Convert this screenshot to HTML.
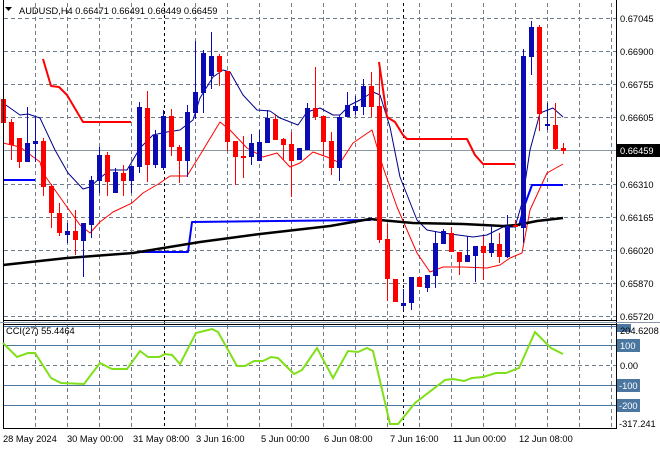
<!DOCTYPE html>
<html><head><meta charset="utf-8"><style>
html,body{margin:0;padding:0;background:#fff;width:660px;height:450px;overflow:hidden}
svg{display:block;font-family:"Liberation Sans",sans-serif}
</style></head><body>
<svg id="s" width="660" height="450" viewBox="0 0 660 450" xmlns="http://www.w3.org/2000/svg">
<rect width="660" height="450" fill="#fff"/>
<g id="grid" stroke="#6f7c8a" stroke-width="1" stroke-dasharray="4,3" fill="none"></g>
<line x1="3" y1="150.5" x2="616" y2="150.5" stroke="#8a96a3"/>
<line x1="164.5" y1="3" x2="164.5" y2="428" stroke="#000" stroke-dasharray="3,3"/>
<line x1="403.5" y1="3" x2="403.5" y2="428" stroke="#000" stroke-dasharray="3,3"/>
<g id="ind" fill="none"></g>
<g id="cdl"></g>
<line x1="3.5" y1="0" x2="3.5" y2="428" stroke="#000"/>
<line x1="616.5" y1="0" x2="616.5" y2="428" stroke="#000"/>
<line x1="3" y1="320.5" x2="617" y2="320.5" stroke="#000"/>
<line x1="0" y1="322.5" x2="660" y2="322.5" stroke="#8a96a3"/>
<line x1="3" y1="324.5" x2="617" y2="324.5" stroke="#000"/>
<line x1="3" y1="428.5" x2="617" y2="428.5" stroke="#000"/>
<line x1="4" y1="326.5" x2="616" y2="326.5" stroke="#4a76a0"/>
<line x1="4" y1="345.5" x2="616" y2="345.5" stroke="#4a76a0"/>
<line x1="4" y1="365.5" x2="616" y2="365.5" stroke="#6f7c8a" stroke-dasharray="4,3"/>
<line x1="4" y1="385.5" x2="616" y2="385.5" stroke="#4a76a0"/>
<line x1="4" y1="405.5" x2="616" y2="405.5" stroke="#4a76a0"/>
<polyline fill="none" stroke="#7fe01a" stroke-width="2" points="3,343 17,357 28,353 35,353 51,378 61,383 84,384 100,363 112,369 127,369 140,351 148,357 159,357 165,354 172,355 180,364 196,333 212,329 218,332 237,366 245,366 254,361 263,361 271,357 278,358 294,374 302,370 317,348 333,378 348,351 358,352 367,348 373,351 390,424 398,424 415,403 445,380 453,379 464,381 472,378 483,377 496,373 506,373 519,368 535,332 547,344 551,348 563,354"/>
<polygon points="5,7 12,7 8.5,11" fill="#000"/>
<text x="19" y="14" font-size="9.3" fill="#000">AUDUSD,H4  0.66471 0.66491 0.66449 0.66459</text>
<text x="6" y="334" font-size="9.3" fill="#000">CCI(27) 55.4464</text>
<g font-size="9.3" fill="#000">
<text x="620" y="22">0.67045</text>
<text x="620" y="55">0.66900</text>
<text x="620" y="88">0.66755</text>
<text x="620" y="121">0.66605</text>
<text x="620" y="188">0.66310</text>
<text x="620" y="221">0.66165</text>
<text x="620" y="254">0.66020</text>
<text x="620" y="287">0.65870</text>
<text x="620" y="320">0.65720</text>
</g>
<rect x="617" y="144" width="43" height="13" fill="#000"/>
<text x="620" y="154" font-size="9.3" fill="#fff">0.66459</text>
<rect x="617" y="324" width="14" height="8" fill="#4a76a0"/>
<text x="620" y="334" font-size="9.3" fill="#000">204.6208</text>
<rect x="617" y="339" width="23" height="13" fill="#4a76a0"/>
<text x="620" y="349" font-size="9.3" fill="#fff">100</text>
<text x="620" y="369" font-size="9.3" fill="#000">0.00</text>
<rect x="617" y="379" width="23" height="13" fill="#4a76a0"/>
<text x="619" y="389" font-size="9.3" fill="#fff">-100</text>
<rect x="617" y="399" width="23" height="13" fill="#4a76a0"/>
<text x="619" y="409" font-size="9.3" fill="#fff">-200</text>
<text x="619" y="427" font-size="9.3" fill="#000">-317.241</text>
<g font-size="9.3" fill="#000">
<text x="3" y="442">28 May 2024</text>
<text x="67" y="442">30 May 00:00</text>
<text x="133" y="442">31 May 08:00</text>
<text x="196" y="442">3 Jun 16:00</text>
<text x="261" y="442">5 Jun 00:00</text>
<text x="324" y="442">6 Jun 08:00</text>
<text x="390" y="442">7 Jun 16:00</text>
<text x="453" y="442">11 Jun 00:00</text>
<text x="519" y="442">12 Jun 08:00</text>
</g>
</svg>
<script>
var NS="http://www.w3.org/2000/svg";
function el(p,t,a){var e=document.createElementNS(NS,t);for(var k in a)e.setAttribute(k,a[k]);p.appendChild(e);return e;}
var g=document.getElementById("grid");
[18,51,84,117,184,217,250,283,316].forEach(function(y){el(g,"line",{x1:4,x2:616,y1:y+.5,y2:y+.5});});
for(var x=35;x<616;x+=32){if(x==163)continue;el(g,"line",{x1:x+.5,x2:x+.5,y1:3,y2:320});el(g,"line",{x1:x+.5,x2:x+.5,y1:325,y2:428});}
var ind=document.getElementById("ind");
function pl(pts,c,w){el(ind,"polyline",{points:pts,stroke:c,"stroke-width":w,"stroke-linejoin":"round"});}
pl("3,103 20,115 28,114 40,118 55,150 68,173 83,189 90,187 100,178 110,170 127,170 140,148 153,135 167,132 180,130 193,120 200,98 213,77 223,70 230,72 243,95 257,110 270,111 280,118 298,125 307,112 320,108 333,115 340,115 350,105 360,100 373,92 380,95 390,127 400,177 417,220 427,230 443,233 473,237 487,235 503,227 515,227 522,203 530,150 540,113 553,108 563,117","#00008b",1);
pl("3,143 20,147 40,162 43,173 50,183 67,207 80,225 90,233 100,222 113,212 132,203 143,193 160,183 170,176 187,176 200,155 220,122 230,130 247,148 263,157 277,153 290,167 300,163 313,152 327,157 340,163 353,143 372,130 383,167 397,207 417,253 430,272 443,267 463,267 487,268 500,265 510,258 522,253 530,210 547,173 563,164","#ff0000",1);
pl("43,59 51,86 59,87 67,95 83,122 131,122","#ff0000",2);
pl("379,62 387,117 395,122 403,135 407,139 467,139 475,155 483,164 515,164","#ff0000",2);
pl("3,180 35,180","#0000ff",2);
pl("137,252 188,252 192,222 370,220 372,218","#0000ff",2);
pl("519,226 524,207 532,185 563,185","#0000ff",2);
pl("3,265 67,258 133,253 200,242 260,234 330,226 370,219 380,220 413,223 463,224 503,226 517,225 537,221 563,218","#000",2.5);
var C=[["r",99,123,75,140],["r",122,145,119,160],["r",138,162,138,168],["b",143,162,107,162],["b",141,144,116,162],["r",141,187,138,196],["r",186,213,184,228],["r",213,233,203,236],["b",231,235,223,243],["r",231,240,210,255],["b",223,241,223,277],["b",180,225,176,238],["b",155,181,147,193],["r",155,182,152,196],["b",172,193,168,193],["r",173,181,165,196],["b",166,181,166,193],["b",107,167,102,173],["r",108,165,91,182],["b",135,165,130,168],["b",116,168,110,170],["r",116,147,109,156],["r",147,161,145,183],["b",112,161,105,177],["b",92,113,41,119],["b",53,93,50,113],["b",56,76,32,89],["r",56,72,54,86],["r",71,142,71,151],["r",141,157,141,185],["r",156,157,136,178],["b",143,157,134,165],["b",142,161,130,161],["b",118,143,110,143],["r",119,140,114,140],["r",139,145,138,160],["r",144,161,132,197],["b",148,160,148,160],["b",108,150,103,150],["r",108,117,67,120],["r",116,142,116,156],["r",141,168,132,175],["b",117,168,115,181],["b",105,117,92,117],["b",106,111,96,115],["b",86,107,79,115],["r",86,107,72,117],["r",106,240,62,243],["r",239,279,224,301],["r",279,302,279,302],["b",303,306,289,310],["b",277,303,277,310],["r",277,287,277,287],["b",275,288,275,292],["b",243,276,232,288],["b",231,244,229,244],["r",233,252,227,252],["r",252,262,252,275],["b",255,262,236,262],["b",246,256,246,282],["r",246,253,236,280],["b",243,253,226,257],["r",244,257,233,263],["b",226,257,215,258],["r",225,227,220,227],["b",56,228,49,243],["b",27,57,21,75],["r",27,114,25,131],["b",124,125,103,130],["r",125,149,103,150],["r",148,151,143,154]];
var cg=document.getElementById("cdl");
C.forEach(function(c,i){var x=3+8*i;var col=c[0]=="r"?"#ff0000":"#0b0bb5";
el(cg,"rect",{x:x,y:c[3],width:1,height:Math.max(1,c[4]-c[3]),fill:col});
el(cg,"rect",{x:x-2,y:c[1],width:5,height:Math.max(2,c[2]-c[1]),fill:col});});
</script>
</body></html>
